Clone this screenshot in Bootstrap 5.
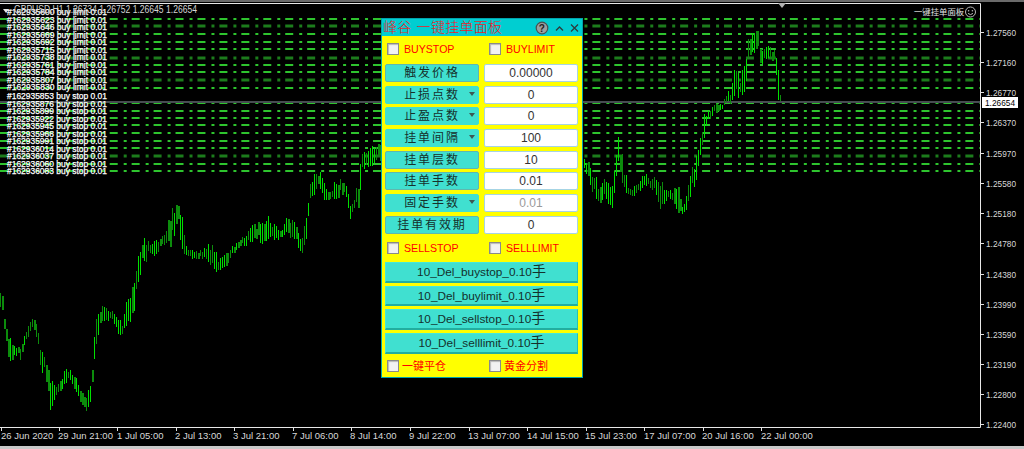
<!DOCTYPE html>
<html lang="zh">
<head>
    <meta charset="UTF-8">
    <meta name="viewport" content="width=device-width, initial-scale=1.0">
    <title>GBPUSD,H1 - 一键挂单面板</title>
    <link href="https://cdn.jsdelivr.net/npm/bootstrap@5.3.0/dist/css/bootstrap.min.css" rel="stylesheet">
    <style>
        :root {
            --panel-cjk: "Liberation Sans", "Noto Sans CJK SC", sans-serif;
            --turq: #40e0d0;
        }
        html, body { background: #000; overflow: hidden; }
        .stage { position: relative; width: 1024px; height: 449px; background: #000; overflow: hidden; }
        .chart-svg { position: absolute; left: 0; top: 0; }
        .chart-svg text { font-family: "Liberation Sans", "Noto Sans CJK SC", sans-serif; }
        .ea-panel {
            position: absolute; left: 381px; top: 18px; width: 202px; height: 360px;
            background: #ff0; border: 1px solid #00a3ad; font-family: var(--panel-cjk);
        }
        .ea-title { height: 17px; background: #00ced1; color: #ea2028; font-size: 14px; font-weight: 300; letter-spacing: .3px; line-height: 17px; padding-left: 1px; }
        .ea-title .word-gap { margin-left: 5px; }
        .ea-body { padding: 7px 4px 0 3px; }
        .check-row { height: 12px; }
        .check-cell { flex: none; width: 102px; height: 12px; color: #f00; font-size: 10.6px; line-height: 12px; gap: 5px; padding-left: 2px; }
        .check-zh { font-size: 11px; gap: 3px; }
        .ea-check[type=checkbox] {
            width: 12px; height: 12px; margin: 0; border-radius: 0; border: 1px solid #8a8a8a;
            background-color: #f2f2f2; box-shadow: inset 1px 1px 1px #b8b8b8; flex: none;
        }
        .form-rows { margin-top: 9px; gap: 3.7px; }
        .form-line { height: 18px; gap: 5px; }
        .lbl-btn {
            position: relative; width: 94px; height: 18px; padding: 0; border-radius: 2px;
            background: var(--turq); border: 1px solid #35c8b8; color: #16302c;
            font-size: 12px; letter-spacing: 1.9px; line-height: 16px;
        }
        .lbl-btn:hover { background: var(--turq); color: #16302c; border-color: #35c8b8; }
        .lbl-plain { border: 1px solid #5fb8ae; }
        .lbl-drop { border-color: #40e0d0; }
        .drop-arrow {
            position: absolute; right: 3px; top: 5px; width: 0; height: 0;
            border-left: 3.5px solid transparent; border-right: 3.5px solid transparent; border-top: 4px solid #3d5a56;
        }
        .val-input {
            width: 94px; height: 18px; padding: 0; border-radius: 2px; border: 1px solid #a6d4e4;
            background: #fff; color: #333; font-size: 12px; line-height: 16px; text-align: center;
            font-family: "Liberation Sans", sans-serif;
        }
        .val-input:disabled { background: #fff; color: #9a9a9a; opacity: 1; }
        .del-rows { margin-top: 8px; gap: 3px; width: 193px; }
        .del-btn {
            height: 20.7px; padding: 0; border-radius: 0; background: var(--turq); color: #14302c;
            border: 1px solid #46e8d8; border-bottom: 2px solid #22ae9f; border-right-color: #2cc0b0;
            font-size: 11.8px; line-height: 17px;
        }
        .del-btn:hover { background: var(--turq); color: #14302c; border-color: #46e8d8; border-bottom-color: #22ae9f; }
        .del-btn .zh { font-size: 14px; }
        .bottom-checks { margin-top: 6px; }
        .title-tools { gap: 6px; padding-right: 3px; }
    </style>
</head>
<body>
    <div class="stage">
        <svg id="chart" class="chart-svg" width="1024" height="449" xmlns="http://www.w3.org/2000/svg"></svg>

        <div class="ea-panel d-flex flex-column">
            <div class="ea-title d-flex justify-content-between align-items-center">
                <span>峰谷<span class="word-gap">一键挂单面板</span></span>
                <span class="title-tools d-flex align-items-center">
                    <svg width="14" height="14" viewBox="0 0 14 14">
                        <circle cx="7" cy="7" r="5.8" fill="#9aa0a0" stroke="#4a5050" stroke-width="1.2"/>
                        <text x="7" y="10.6" text-anchor="middle" font-size="10" font-weight="bold" font-family="Liberation Sans, sans-serif" fill="#222">?</text>
                    </svg>
                    <svg width="9" height="14" viewBox="0 0 9 14"><polyline points="1,9.5 4.5,6 8,9.5" fill="none" stroke="#2c3c3c" stroke-width="1.3"/></svg>
                    <svg width="9" height="14" viewBox="0 0 9 14"><path d="M1 3.5 L8 10.5 M8 3.5 L1 10.5" fill="none" stroke="#2c3c3c" stroke-width="1.3"/></svg>
                </span>
            </div>
            <div class="ea-body">
                <div class="check-row d-flex">
                    <label class="check-cell d-flex align-items-center"><input type="checkbox" class="form-check-input ea-check">BUYSTOP</label>
                    <label class="check-cell d-flex align-items-center"><input type="checkbox" class="form-check-input ea-check">BUYLIMIT</label>
                </div>

                <div class="form-rows d-flex flex-column">
                    <div class="form-line d-flex">
                        <button type="button" class="btn lbl-btn lbl-plain">触发价格</button>
                        <input class="form-control val-input" value="0.00000">
                    </div>
                    <div class="form-line d-flex">
                        <button type="button" class="btn lbl-btn lbl-drop">止损点数<span class="drop-arrow"></span></button>
                        <input class="form-control val-input" value="0">
                    </div>
                    <div class="form-line d-flex">
                        <button type="button" class="btn lbl-btn lbl-drop">止盈点数<span class="drop-arrow"></span></button>
                        <input class="form-control val-input" value="0">
                    </div>
                    <div class="form-line d-flex">
                        <button type="button" class="btn lbl-btn lbl-drop">挂单间隔<span class="drop-arrow"></span></button>
                        <input class="form-control val-input" value="100">
                    </div>
                    <div class="form-line d-flex">
                        <button type="button" class="btn lbl-btn lbl-plain">挂单层数</button>
                        <input class="form-control val-input" value="10">
                    </div>
                    <div class="form-line d-flex">
                        <button type="button" class="btn lbl-btn lbl-plain">挂单手数</button>
                        <input class="form-control val-input" value="0.01">
                    </div>
                    <div class="form-line d-flex">
                        <button type="button" class="btn lbl-btn lbl-drop">固定手数<span class="drop-arrow"></span></button>
                        <input class="form-control val-input" value="0.01" disabled>
                    </div>
                    <div class="form-line d-flex">
                        <button type="button" class="btn lbl-btn lbl-plain">挂单有效期</button>
                        <input class="form-control val-input" value="0">
                    </div>
                </div>

                <div class="check-row d-flex mt-2">
                    <label class="check-cell d-flex align-items-center"><input type="checkbox" class="form-check-input ea-check">SELLSTOP</label>
                    <label class="check-cell d-flex align-items-center"><input type="checkbox" class="form-check-input ea-check">SELLLIMIT</label>
                </div>

                <div class="del-rows d-flex flex-column">
                    <button type="button" class="btn del-btn">10_Del_buystop_0.10<span class="zh">手</span></button>
                    <button type="button" class="btn del-btn">10_Del_buylimit_0.10<span class="zh">手</span></button>
                    <button type="button" class="btn del-btn">10_Del_sellstop_0.10<span class="zh">手</span></button>
                    <button type="button" class="btn del-btn">10_Del_selllimit_0.10<span class="zh">手</span></button>
                </div>

                <div class="check-row bottom-checks d-flex">
                    <label class="check-cell check-zh d-flex align-items-center"><input type="checkbox" class="form-check-input ea-check">一键平仓</label>
                    <label class="check-cell check-zh d-flex align-items-center"><input type="checkbox" class="form-check-input ea-check">黄金分割</label>
                </div>
            </div>
        </div>
    </div>

    <script src="https://cdn.jsdelivr.net/npm/bootstrap@5.3.0/dist/js/bootstrap.bundle.min.js"></script>
    <script>
        const svg = document.getElementById('chart');
        const NS = 'http://www.w3.org/2000/svg';

        function add(tag, attrs, text) {
            const el = document.createElementNS(NS, tag);
            for (const k in attrs) el.setAttribute(k, attrs[k]);
            if (text !== undefined) el.textContent = text;
            svg.appendChild(el);
            return el;
        }

        // window frame
        add('rect', { x: 0, y: 0, width: 1024, height: 2, fill: '#6a6a6a' });
        add('rect', { x: 0, y: 446, width: 1024, height: 3, fill: '#c8c8c8' });
        add('path', { d: 'M0 3.5H980.5V427.5H0', fill: 'none', stroke: '#e8e8e8', 'stroke-width': 1 });
        add('polygon', { points: '778,3 786,3 782,8', fill: '#b0b0b0' });

        // pending order lines
        const upper = [19, 26, 34, 42, 49, 58, 65, 72, 80, 88];
        const lower = [103, 111, 118, 125, 133, 141, 148, 156, 164, 171];
        const doubled = [26, 58, 80, 156];
        upper.concat(lower).forEach(y => {
            const thick = doubled.includes(y);
            add('line', {
                x1: 0, x2: 980, y1: y, y2: y,
                stroke: thick ? '#1c7c1c' : '#2ec42e', 'stroke-width': thick ? 3 : 2,
                'stroke-dasharray': '8 6 3 4.94'
            });
        });
        add('rect', { x: 0, y: 101, width: 980, height: 2, fill: '#474c52' });

        // price envelope: x, high, low
        const pts = [[0,290,313],[2,290,313],[5,320,340],[8,337,370],[11,338,362],[15,345,355],[20,346,360],[24,335,345],[28,325,340],[33,313,330],[37,320,345],[40,345,370],[45,355,378],[50,375,416],[55,385,400],[60,380,395],[65,368,385],[70,370,382],[77,378,395],[82,390,410],[85,395,412],[90,385,405],[93,360,380],[95,310,345],[100,308,330],[105,305,322],[112,308,320],[118,315,335],[122,322,335],[127,295,325],[133,288,320],[137,260,285],[143,235,265],[150,240,255],[155,240,258],[163,232,245],[170,210,245],[178,205,228],[182,215,252],[187,250,258],[195,250,260],[200,250,258],[207,245,260],[212,240,275],[220,258,272],[225,250,270],[232,245,255],[240,238,247],[245,235,248],[255,220,240],[262,220,245],[268,215,242],[272,222,240],[280,230,240],[287,215,235],[295,220,245],[300,235,255],[305,225,250],[310,180,200],[315,172,195],[320,172,190],[325,185,205],[330,190,200],[337,175,200],[345,180,195],[350,200,222],[353,200,215],[358,175,210],[362,150,170],[380,140,165],
            [584,158,170],[590,160,190],[598,182,205],[605,180,200],[612,185,210],[618,135,165],[622,150,190],[628,187,195],[632,188,198],[640,178,192],[645,172,185],[650,180,190],[655,175,195],[660,180,218],[665,185,205],[672,190,200],[678,175,215],[682,205,215],[686,195,212],[692,165,195],[695,160,185],[698,145,170],[702,120,150],[705,110,135],[708,110,120],[712,105,118],[717,100,112],[722,103,110],[727,92,100],[730,88,105],[734,63,100],[740,75,97],[745,63,97],[747,37,67],[753,24,55],[758,28,50],[760,48,70],[765,45,62],[770,45,60],[775,50,65],[778,57,105],[780,93,103]];

        let seed = 7;
        function rnd() {
            seed = (seed * 1103515245 + 12345) % 2147483648;
            return seed / 2147483648;
        }
        function at(x) {
            for (let i = 0; i < pts.length - 1; i++) {
                const a = pts[i], b = pts[i + 1];
                if (x >= a[0] && x <= b[0]) {
                    const t = (x - a[0]) / (b[0] - a[0]);
                    return [a[1] + (b[1] - a[1]) * t, a[2] + (b[2] - a[2]) * t];
                }
            }
            return null;
        }
        for (let x = 0; x <= 780; x += 2) {
            if (x > 380 && x < 583) continue;
            const e = at(x);
            if (!e) continue;
            const range = e[1] - e[0];
            const r = rnd();
            if (r < 0.45) {
                // long thin bar
                const hi = Math.round(e[0] + range * rnd() * 0.3), lo = Math.round(e[1] - range * rnd() * 0.2);
                add('line', { x1: x + 0.5, x2: x + 0.5, y1: hi, y2: lo, stroke: '#00e000', 'stroke-width': 1 });
            } else {
                // short dull bar, some of them wide
                const mid = e[0] + range * (0.3 + rnd() * 0.4);
                const half = Math.max(3, range * (0.2 + rnd() * 0.2));
                const wide = r > 0.8;
                add('line', {
                    x1: wide ? x + 1 : x + 0.5, x2: wide ? x + 1 : x + 0.5,
                    y1: Math.round(mid - half), y2: Math.round(mid + half),
                    stroke: '#0c8c0c', 'stroke-width': wide ? 2 : 1
                });
            }
        }

        // order labels on the left
        const rowsY = [];
        for (let i = 0; i < 11; i++) rowsY.push(15 + i * 7.5);
        for (let i = 0; i < 11; i++) rowsY.push(99 + i * 7.5);
        rowsY.forEach((y, i) => {
            const kind = i < 11 ? 'buy limit' : 'buy stop';
            const id = 162935600 + i * 23;
            add('text', {
                x: 7, y: y, 'font-size': 8.5, fill: '#ffffff', stroke: '#ffffff', 'stroke-width': 0.25,
                textLength: 100, lengthAdjust: 'spacingAndGlyphs'
            }, '#' + id + ' ' + kind + ' 0.01');
        });

        // symbol line
        add('polygon', { points: '3,9 9,9 6,13', fill: '#e8e8e8' });
        add('text', { x: 14, y: 13, 'font-size': 10, fill: '#d4d4d4', textLength: 183, lengthAdjust: 'spacingAndGlyphs' }, 'GBPUSD,H1  1.26734 1.26752 1.26645 1.26654');

        // indicator name + smiley
        add('text', { x: 914, y: 15, 'font-size': 8.4, fill: '#e0e0e0' }, '一键挂单面板');
        add('circle', { cx: 970.5, cy: 12, r: 5, fill: 'none', stroke: '#b8b8b8', 'stroke-width': 1 });
        add('circle', { cx: 968.6, cy: 10.8, r: 0.8, fill: '#b8b8b8' });
        add('circle', { cx: 972.4, cy: 10.8, r: 0.8, fill: '#b8b8b8' });
        add('path', { d: 'M968 13.4Q970.5 15.8 973 13.4', fill: 'none', stroke: '#b8b8b8', 'stroke-width': 1 });

        // price axis
        const prices = [['1.27560',32],['1.27160',62],['1.26770',92],['1.26370',122],['1.25970',153],['1.25580',183],['1.25180',213],['1.24780',243],['1.24380',274],['1.23990',304],['1.23590',334],['1.23190',364],['1.22800',394],['1.22400',424]];
        prices.forEach(p => {
            add('line', { x1: 981, x2: 984, y1: p[1] + 0.5, y2: p[1] + 0.5, stroke: '#e0e0e0' });
            add('text', { x: 986, y: p[1] + 3.5, 'font-size': 9.5, fill: '#d8d8d8', textLength: 30, lengthAdjust: 'spacingAndGlyphs' }, p[0]);
        });
        add('rect', { x: 982, y: 97, width: 36, height: 11, fill: '#fff' });
        add('text', { x: 985, y: 106, 'font-size': 9.5, fill: '#000', textLength: 30, lengthAdjust: 'spacingAndGlyphs' }, '1.26654');

        // time axis
        const times = [['26 Jun 2020',1,1],['29 Jun 21:00',58,59],['1 Jul 05:00',117,117],['2 Jul 13:00',175,176],['3 Jul 21:00',233,234],['7 Jul 06:00',292,293],['8 Jul 14:00',350,351],['9 Jul 22:00',409,410],['13 Jul 07:00',468,469],['14 Jul 15:00',527,527],['15 Jul 23:00',585,586],['17 Jul 07:00',644,644],['20 Jul 16:00',702,703],['22 Jul 00:00',761,761]];
        times.forEach(t => {
            add('line', { x1: t[2] + 0.5, x2: t[2] + 0.5, y1: 428, y2: 431, stroke: '#e0e0e0' });
            add('text', { x: t[1], y: 439, 'font-size': 9.5, fill: '#d8d8d8' }, t[0]);
        });
    </script>
</body>
</html>
